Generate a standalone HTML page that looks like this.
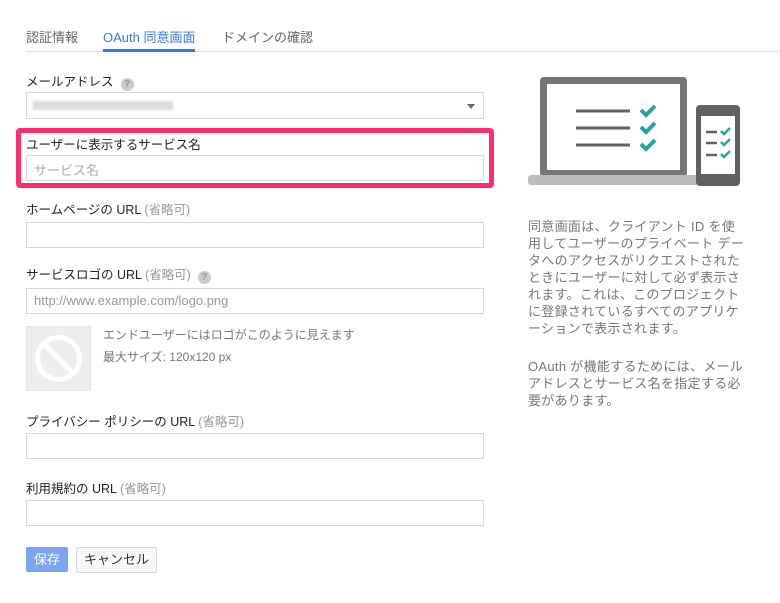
<!DOCTYPE html>
<html><head><meta charset="utf-8"><style>
body{margin:0;width:780px;height:603px;background:#fff;font-family:"Liberation Sans","Noto Sans CJK JP",sans-serif;position:relative;overflow:hidden;color:#222}
.a{position:absolute}
.lbl{position:absolute;left:26px;font-size:12.5px;color:#222;white-space:nowrap}
.lbl span{color:#999}
.inp{position:absolute;left:26px;width:456px;height:24px;border:1px solid #d9d9d9;background:#fff}
.help{display:inline-block;width:13px;height:13px;border-radius:50%;background:#ccc;color:#fff;font-size:10px;text-align:center;line-height:13px;font-weight:bold;margin-left:7px;vertical-align:-1px}
.rt{position:absolute;left:528px;font-size:13px;line-height:17px;color:#777;white-space:nowrap;letter-spacing:0.3px}
</style></head><body>
<div class="a" style="left:26px;top:27px;font-size:13px;color:#666">認証情報</div>
<div class="a" style="left:103px;top:27px;font-size:13px;color:#3b78e7">OAuth 同意画面</div>
<div class="a" style="left:222px;top:27px;font-size:13px;color:#666">ドメインの確認</div>
<div class="a" style="left:26px;top:51px;width:754px;height:1px;background:#e0e0e0"></div>
<div class="a" style="left:103px;top:49px;width:92px;height:3px;background:#3b78e7"></div>

<div class="lbl" style="top:71px">メールアドレス<span class="help">?</span></div>
<div class="inp" style="top:92px;height:25px"><div class="a" style="left:6px;top:8px;width:140px;height:9px;background:#ddd;filter:blur(1px)"></div><div class="a" style="right:8px;top:11px;border-left:4px solid transparent;border-right:4px solid transparent;border-top:5px solid #666"></div></div>

<div class="a" style="left:16px;top:128px;width:468px;height:50px;border:5px solid #ff2d6a;border-radius:4px"></div>
<div class="lbl" style="top:134px">ユーザーに表示するサービス名</div>
<div class="inp" style="top:155px"><div class="a" style="left:7px;top:4px;font-size:13px;color:#aaa">サービス名</div></div>

<div class="lbl" style="top:199px">ホームページの URL <span>(省略可)</span></div>
<div class="inp" style="top:222px"></div>
<div class="lbl" style="top:264px">サービスロゴの URL <span>(省略可)</span><span class="help">?</span></div>
<div class="inp" style="top:288px"><div class="a" style="left:7px;top:4px;font-size:13px;color:#999">http://www.example.com/logo.png</div></div>

<div class="a" style="left:26px;top:326px;width:63px;height:63px;background:#eee;border:1px solid #e4e4e4">
<svg width="63" height="63" viewBox="0 0 63 63"><circle cx="31.5" cy="31.5" r="21" fill="none" stroke="#fff" stroke-width="5"/><line x1="17" y1="17" x2="46" y2="46" stroke="#fff" stroke-width="5"/></svg></div>
<div class="a" style="left:103px;top:326px;font-size:12px;color:#777">エンドユーザーにはロゴがこのように見えます</div>
<div class="a" style="left:103px;top:348px;font-size:12px;color:#777">最大サイズ: 120x120 px</div>

<div class="lbl" style="top:411px">プライバシー ポリシーの URL <span>(省略可)</span></div>
<div class="inp" style="top:433px"></div>
<div class="lbl" style="top:478px">利用規約の URL <span>(省略可)</span></div>
<div class="inp" style="top:500px"></div>

<div class="a" style="left:26px;top:547px;width:42px;height:25px;background:#7ba4f0;border-radius:2px;color:#fff;font-size:13px;text-align:center;line-height:25px">保存</div>
<div class="a" style="left:76px;top:547px;width:79px;height:24px;border:1px solid #d6d6d6;border-radius:2px;background:#f8f8f8;font-size:13px;text-align:center;line-height:24px;color:#333">キャンセル</div>

<svg class="a" style="left:510px;top:60px" width="260" height="140" viewBox="0 0 260 140">
<rect x="30" y="17" width="147" height="100" rx="4" fill="#757575"/>
<rect x="37" y="24" width="133" height="86" fill="#fff"/>
<rect x="18" y="115" width="170" height="10" rx="3" fill="#bdbdbd"/>
<g stroke="#616161" stroke-width="3"><line x1="66" y1="51" x2="120" y2="51"/><line x1="66" y1="68" x2="120" y2="68"/><line x1="66" y1="85" x2="120" y2="85"/></g>
<g stroke="#26a69a" stroke-width="4" fill="none"><path d="M131 50l5 5 9-9"/><path d="M131 67l5 5 9-9"/><path d="M131 84l5 5 9-9"/></g>
<rect x="186" y="45" width="44" height="81" rx="4" fill="#616161"/>
<rect x="191" y="56" width="34" height="58" fill="#fff"/>
<g stroke="#616161" stroke-width="2.5"><line x1="196" y1="72" x2="207" y2="72"/><line x1="196" y1="83" x2="207" y2="83"/><line x1="196" y1="95" x2="207" y2="95"/></g>
<g stroke="#26a69a" stroke-width="2.5" fill="none"><path d="M211 71l3 3 6-6"/><path d="M211 82l3 3 6-6"/><path d="M211 94l3 3 6-6"/></g>
</svg>

<div class="rt" style="top:218px">同意画面は、クライアント ID を使<br>用してユーザーのプライベート デー<br>タへのアクセスがリクエストされた<br>ときにユーザーに対して必ず表示さ<br>れます。これは、このプロジェクト<br>に登録されているすべてのアプリケ<br>ーションで表示されます。</div>
<div class="rt" style="top:358px">OAuth が機能するためには、メール<br>アドレスとサービス名を指定する必<br>要があります。</div>
</body></html>
